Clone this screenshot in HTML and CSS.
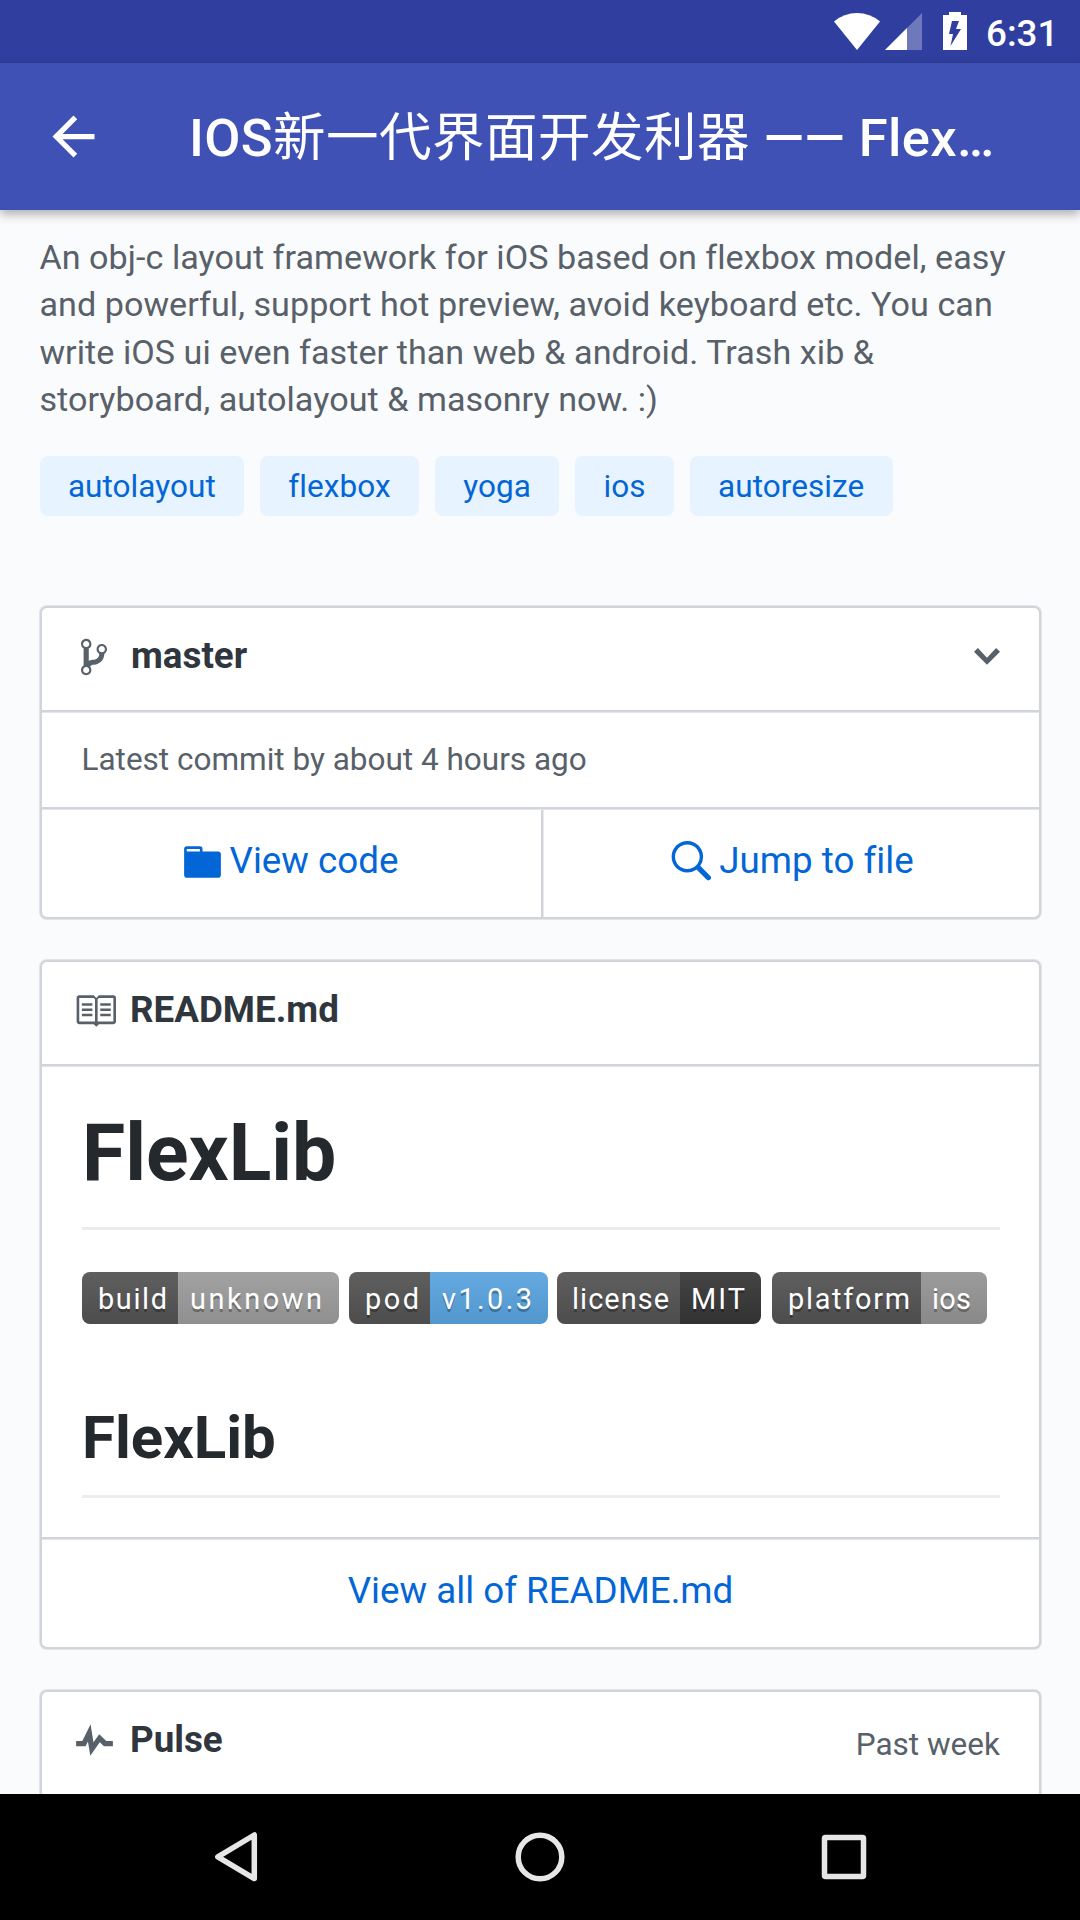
FILE: index.html
```html
<!DOCTYPE html>
<html lang="zh">
<head>
<meta charset="utf-8">
<title>FlexLib</title>
<link rel="stylesheet" href="styles.css">
</head>
<body>
<div class="screen">
  <div class="status">
    <svg class="wifi" viewBox="0 0 46 37"><path d="M0 8.5Q10 0 23 0T46 8.5L23 37z"/></svg>
    <svg class="signal" viewBox="0 0 37 37"><path d="M37 0v37H0z" opacity=".3"/><path d="M22 15v22H0z"/></svg>
    <svg class="battery" viewBox="0 0 24 38"><path fill-rule="evenodd" d="M6 0h12v3h6v35H0V3h6zM9 9L6 22h4L7.500 34 18 17h-5l3-8z"/></svg>
    <span class="clock">6:31</span>
  </div>
  <header class="appbar">
    <svg class="back" viewBox="0 0 24 24"><path d="M20 11H7.830l5.590-5.590L12 4l-8 8 8 8 1.410-1.410L7.830 13H20v-2z"/></svg>
    <h1 class="title">IOS<span class="han">新一代界面开发利器</span> —— Flex…</h1>
  </header>
  <main class="page">
    <p class="description">An obj-c layout framework for iOS based on flexbox model, easy<br>and powerful, support hot preview, avoid keyboard etc. You can<br>write iOS ui even faster than web &amp; android. Trash xib &amp;<br>storyboard, autolayout &amp; masonry now. :)</p>
    <div class="tags">
      <a class="tag">autolayout</a><a class="tag">flexbox</a><a class="tag">yoga</a><a class="tag">ios</a><a class="tag">autoresize</a>
    </div>

    <section class="card">
      <div class="card-head branch">
        <svg class="icon narrow" viewBox="0 0 10 16"><path fill-rule="evenodd" d="M10 5c0-1.110-.89-2-2-2a1.993 1.993 0 0 0-1 3.720v.3c-.02.52-.23.98-.63 1.380-.4.4-.86.61-1.380.63-.83.02-1.480.16-2 .45V4.720a1.993 1.993 0 0 0-1-3.720C.88 1 0 1.890 0 3a2 2 0 0 0 1 1.720v6.560c-.59.35-1 .99-1 1.720 0 1.110.89 2 2 2 1.110 0 2-.89 2-2 0-.53-.2-1-.53-1.360.09-.06.48-.41.59-.47.25-.11.56-.17.94-.17 1.050-.05 1.950-.45 2.750-1.250S8.950 7.770 9 6.730h-.02C9.590 6.370 10 5.730 10 5zM2 1.800c.66 0 1.200.55 1.200 1.200 0 .65-.55 1.200-1.200 1.200C1.350 4.200.8 3.650.8 3c0-.65.55-1.200 1.200-1.200zm0 12.410c-.66 0-1.200-.55-1.200-1.200 0-.65.55-1.200 1.200-1.200.65 0 1.200.55 1.200 1.200 0 .65-.55 1.200-1.200 1.200zm6-8c-.66 0-1.200-.55-1.200-1.200 0-.65.55-1.200 1.200-1.200.65 0 1.200.55 1.200 1.200 0 .65-.55 1.200-1.200 1.200z"/></svg>
        <strong class="head-text">master</strong>
        <svg class="icon narrow" viewBox="0 0 10 16"><path d="M5 11L0 6l1.500-1.500L5 8.250 8.500 4.500 10 6l-5 5z"/></svg>
      </div>
      <div class="commit">Latest commit by about 4 hours ago</div>
      <div class="actions">
        <a class="action">
          <svg class="icon folder" viewBox="0 0 14 16"><path fill-rule="evenodd" d="M13 4H7V3c0-.66-.31-1-1-1H1c-.55 0-1 .45-1 1v10c0 .55.45 1 1 1h12c.55 0 1-.45 1-1V5c0-.55-.45-1-1-1zM6 4H1V3h5v1z"/></svg>
          <span>View code</span>
        </a>
        <a class="action">
          <svg class="icon" viewBox="0 0 16 16"><path fill-rule="evenodd" d="M15.700 13.300l-3.810-3.830A5.930 5.930 0 0 0 13 6c0-3.310-2.690-6-6-6S1 2.690 1 6s2.690 6 6 6c1.300 0 2.480-.41 3.470-1.110l3.830 3.810c.19.2.45.3.7.3.25 0 .52-.09.7-.3a.996.996 0 0 0 0-1.410v.01zM7 10.700c-2.590 0-4.700-2.110-4.700-4.700 0-2.590 2.110-4.700 4.700-4.700 2.590 0 4.700 2.110 4.700 4.700 0 2.590-2.110 4.700-4.700 4.700z"/></svg>
          <span>Jump to file</span>
        </a>
      </div>
    </section>

    <section class="card">
      <div class="card-head">
        <svg class="icon" viewBox="0 0 16 16"><path fill-rule="evenodd" d="M3 5h4v1H3V5zm0 3h4V7H3v1zm0 2h4V9H3v1zm11-5h-4v1h4V5zm0 2h-4v1h4V7zm0 2h-4v1h4V9zm2-6v9c0 .55-.45 1-1 1H9.500l-1 1-1-1H2c-.55 0-1-.45-1-1V3c0-.55.45-1 1-1h5.500l1 1 1-1H15c.55 0 1 .45 1 1zm-8 .5L7.500 3H2v9h6V3.500zm7-.5H9.500l-.5.5V12h6V3z"/></svg>
        <strong class="head-text">README.md</strong>
      </div>
      <article class="readme">
        <h1 class="h1">FlexLib</h1>
        <div class="badges">
          <svg width="257" height="52" viewBox="0 0 257 52">
            <defs>
              <linearGradient id="shine" x2="0" y2="1"><stop offset="0" stop-color="#bbb" stop-opacity=".1"/><stop offset="1" stop-opacity=".1"/></linearGradient>
              <clipPath id="c1"><rect width="257" height="52" rx="8"/></clipPath>
            </defs>
            <g clip-path="url(#c1)"><rect width="96.500" height="52" fill="#555"/><rect x="96.500" width="161" height="52" fill="#9f9f9f"/><rect width="257" height="52" fill="url(#shine)"/></g>
            <g class="badge-text"><text x="16" y="37" textLength="69">build</text><text x="108" y="37" textLength="132">unknown</text></g>
          </svg>
          <svg class="pod" width="199" height="52" viewBox="0 0 199 52">
            <clipPath id="c2"><rect width="199" height="52" rx="8"/></clipPath>
            <g clip-path="url(#c2)"><rect width="81" height="52" fill="#555"/><rect x="81" width="119" height="52" fill="#5ba7e5"/><rect width="199" height="52" fill="url(#shine)"/></g>
            <g class="badge-text"><text x="16" y="37" textLength="54">pod</text><text x="93" y="37" textLength="90">v1.0.3</text></g>
          </svg>
          <svg class="license" width="204" height="52" viewBox="0 0 204 52">
            <clipPath id="c3"><rect width="204" height="52" rx="8"/></clipPath>
            <g clip-path="url(#c3)"><rect width="123" height="52" fill="#555"/><rect x="123" width="81" height="52" fill="#373737"/><rect width="204" height="52" fill="url(#shine)"/></g>
            <g class="badge-text"><text x="15" y="37" textLength="97">license</text><text x="134" y="37" textLength="54">MIT</text></g>
          </svg>
          <svg width="215" height="52" viewBox="0 0 215 52">
            <clipPath id="c4"><rect width="215" height="52" rx="8"/></clipPath>
            <g clip-path="url(#c4)"><rect width="149" height="52" fill="#555"/><rect x="149" width="66" height="52" fill="#989898"/><rect width="215" height="52" fill="url(#shine)"/></g>
            <g class="badge-text"><text x="16" y="37" textLength="122">platform</text><text x="160" y="37" textLength="39">ios</text></g>
          </svg>
        </div>
        <h2 class="h2">FlexLib</h2>
      </article>
      <a class="view-all">View all of README.md</a>
    </section>

    <section class="card">
      <div class="card-head pulse">
        <svg class="icon folder" viewBox="0 0 14 16"><path d="M11.500 8L8.800 5.400 6.600 8.500 5.500 1.600 2.380 8H0v2h3.600l.9-1.800.9 5.400L9 8.500l1.600 1.500H14V8h-2.500z"/></svg>
        <strong class="head-text">Pulse</strong>
        <span class="period">Past week</span>
      </div>
    </section>
  </main>
  <nav class="navbar">
    <svg viewBox="0 0 60 60"><path d="M48.300 8v43.600L11.800 29.800z"/></svg>
    <svg viewBox="0 0 60 60"><circle cx="30" cy="30" r="21.800"/></svg>
    <svg viewBox="0 0 60 60"><rect x="10.500" y="10.500" width="39" height="39" rx="1"/></svg>
  </nav>
</div>
</body>
</html>
```

FILE: styles.css
```css
* { box-sizing: border-box; }

body {
  margin: 0;
  font-family: Roboto, "Noto Sans CJK SC", sans-serif;
  font-variant-ligatures: none;
  background: #fafbfc;
}

h1, h2, p { margin: 0; }
svg { display: block; flex: none; }

.screen {
  display: flex;
  flex-direction: column;
  width: 1080px;
  height: 1920px;
  overflow: hidden;
}

/* System status bar */
.status {
  flex: none;
  display: flex;
  align-items: flex-start;
  height: 63px;
  padding: 12px 25px 0 834px;
  background: #303f9f;
  color: #fff;
  fill: #fff;
}
.wifi { width: 46px; height: 37px; margin-top: 1px; }
.signal { width: 37px; height: 37px; margin: 1px 0 0 5px; }
.battery { width: 24px; height: 38px; margin-left: 21px; }
.clock {
  margin-left: 19px;
  font-size: 36.750px;
  font-weight: 500;
  line-height: 43px;
}

/* Toolbar */
.appbar {
  flex: none;
  position: relative;
  z-index: 1;
  display: flex;
  align-items: center;
  height: 147px;
  padding-left: 42px;
  background: #3f51b5;
  color: #fff;
  fill: #fff;
  box-shadow: 0 4px 10px rgba(0, 0, 0, .32);
}
.back { width: 63px; height: 63px; }
.title {
  margin-left: 84px;
  padding-top: 2px;
  font-size: 52.500px;
  font-weight: 500;
  line-height: 62px;
  letter-spacing: .4px;
  white-space: nowrap;
}
.han { font-weight: 400; letter-spacing: .5px; }

/* Page body */
.page {
  flex: 1;
  min-height: 0;
  overflow: hidden;
  padding: 24px 38px 0 39px;
}
.description {
  padding-left: .4px;
  font-size: 34.125px;
  line-height: 47.250px;
  letter-spacing: .05px;
  color: #586069;
  white-space: nowrap;
}
.tags {
  display: flex;
  gap: 15.750px;
  margin: 33px 0 90px .5px;
}
.tag {
  height: 60px;
  padding: 0 28.400px;
  border-radius: 8px;
  background: #e7f3ff;
  color: #0366d6;
  font-size: 31.500px;
  line-height: 62px;
  letter-spacing: .06px;
}

.card {
  margin: 0 1px 41px;
  border: 2px solid #d1d5da;
  border-radius: 7px;
  background: #fff;
  box-shadow: 0 0 0 1px rgba(209, 213, 218, .6);
}
.card-head {
  display: flex;
  align-items: center;
  height: 104px;
  margin-bottom: 1px;
  padding: 0 39px 4px 32px;
  border-bottom: 2px solid #d1d5da;
  box-shadow: 0 1px 0 rgba(209, 213, 218, .6);
  fill: #586069;
}
.branch { padding-left: 39px; }
.icon { width: 42px; height: 42px; }
.narrow { width: 26px; }
.folder { width: 37px; }
.head-text {
  flex: 1;
  margin-left: 14px;
  padding-bottom: 3px;
  font-size: 36.750px;
  color: #2f363d;
}
.branch .head-text { margin-left: 24px; }
.commit {
  height: 96px;
  margin-bottom: 1px;
  padding-left: 39.500px;
  border-bottom: 2px solid #d1d5da;
  box-shadow: 0 1px 0 rgba(209, 213, 218, .6);
  font-size: 31.500px;
  line-height: 94px;
  color: #586069;
}
.actions { display: grid; grid-template-columns: 499px 1fr; height: 107px; }
.action {
  display: flex;
  align-items: flex-start;
  justify-content: center;
  padding-top: 31px;
  color: #0366d6;
  fill: #0366d6;
  font-size: 36.750px;
  line-height: 40px;
}
.action:first-child { padding-right: 1px; }
.action + .action {
  padding-left: 1px;
  border-left: 2px solid #d1d5da;
  box-shadow: inset 1px 0 0 rgba(209, 213, 218, .5);
}
.action span { margin-left: 9px; }
.action + .action span { margin-left: 8px; }

.readme { padding: 39px 39px 39px 40px; height: 470px; }
.h1 {
  height: 124px;
  border-bottom: 3px solid #eaecef;
  font-size: 78.750px;
  line-height: 94px;
  color: #24292e;
}
.badges { display: flex; margin: 42px 0 0 -.4px; }
.pod { margin-left: 10.600px; }
.license { margin: 0 11px 0 8.400px; }
.badge-text {
  fill: #fff;
  font-size: 28.875px;
  text-shadow: 0 2.600px 0 rgba(1, 1, 1, .3);
}
.h2 {
  height: 92px;
  margin-top: 82px;
  border-bottom: 3px solid #eaecef;
  font-size: 60px;
  line-height: 64px;
  color: #24292e;
}
.view-all {
  display: block;
  height: 110px;
  border-top: 2px solid #d1d5da;
  box-shadow: inset 0 1px 0 rgba(209, 213, 218, .6);
  color: #0366d6;
  font-size: 36.750px;
  line-height: 104px;
  text-align: center;
}
.pulse { padding-left: 34px; }
.pulse .head-text { margin-left: 17px; }
.period {
  padding-top: 7px;
  font-size: 31.500px;
  color: #586069;
}

/* System navigation bar */
.navbar {
  flex: none;
  display: flex;
  align-items: center;
  justify-content: space-between;
  height: 126px;
  padding: 0 206px;
  background: #000;
}
.navbar svg {
  width: 60px;
  height: 60px;
  fill: none;
  stroke: #e6e6e6;
  stroke-width: 5.500;
  stroke-linejoin: round;
}
```
